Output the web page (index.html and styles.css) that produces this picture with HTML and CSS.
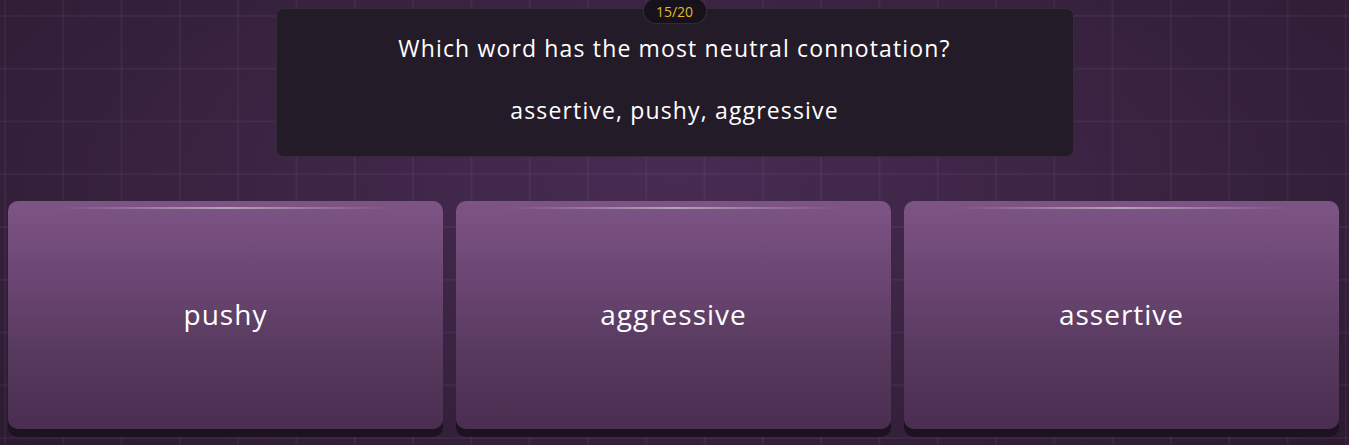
FILE: index.html
```html
<!DOCTYPE html>
<html lang="en">
<head>
    <meta charset="UTF-8">
    <meta name="viewport" content="width=device-width, initial-scale=1.0">
    <title>Word Quiz</title>
    <link rel="stylesheet" href="styles.css">
</head>
<body>
    <div class="quiz">
        <div class="question-box">
            <div class="progress">15/20</div>
            <p class="question">Which word has the most neutral connotation?</p>
            <p class="words">assertive, pushy, aggressive</p>
        </div>

        <div class="answers">
            <button class="answer">pushy</button>
            <button class="answer">aggressive</button>
            <button class="answer">assertive</button>
        </div>
    </div>
</body>
</html>
```

FILE: styles.css
```css
body {
    margin: 0;
    height: 100vh;
    overflow: hidden;
    font-family: 'Open Sans', 'Noto Sans', sans-serif;
    font-variant-ligatures: none;
    color: #fff;
    background-color: #33203a;
    background-image:
        linear-gradient(90deg, rgba(255, 255, 255, 0.04) 2px, transparent 2px),
        linear-gradient(rgba(255, 255, 255, 0.04) 2px, transparent 2px),
        radial-gradient(ellipse 70% 90% at 50% 40%, #482b53 0%, #3b2443 45%, #2b1a30 100%);
    background-size: 58.3px 100%, 100% 52.75px, 100% 100%;
    background-position: 4px 0, 0 15px, 0 0;
}

.quiz {
    display: flex;
    flex-direction: column;
    align-items: center;
    padding-top: 8px;
}

.question-box {
    position: relative;
    box-sizing: border-box;
    width: 798px;
    height: 149px;
    padding-top: 24px;
    background: #241b29;
    border: 1px solid rgba(255, 255, 255, 0.07);
    border-radius: 8px;
    text-align: center;
}

.progress {
    position: absolute;
    top: -11px;
    left: 50%;
    transform: translateX(-50%);
    width: 62px;
    height: 24px;
    line-height: 26px;
    font-size: 14px;
    color: #e2bb22;
    background: #16111a;
    border: 1px solid rgba(255, 255, 255, 0.12);
    border-radius: 13px;
}

.question,
.words {
    margin: 0;
    font-size: 23px;
    line-height: 30px;
    letter-spacing: 1.15px;
}

.words {
    margin-top: 32px;
}

.answers {
    display: grid;
    grid-template-columns: repeat(3, 1fr);
    gap: 13px;
    width: 100%;
    box-sizing: border-box;
    padding: 0 10px 0 8px;
    margin-top: 44px;
}

.answer {
    position: relative;
    height: 228px;
    padding-bottom: 4px;
    border: none;
    border-radius: 10px;
    font-family: inherit;
    font-size: 28px;
    letter-spacing: 1px;
    color: #fff;
    background: linear-gradient(#7d5585 0%, #6b4672 35%, #583a5f 65%, #4a2e50 100%);
    box-shadow: 0 8px 0 #1d1220;
    cursor: pointer;
}

/* thin shine along the top edge */
.answer::before {
    content: '';
    position: absolute;
    top: 6px;
    left: 12%;
    right: 12%;
    height: 2px;
    background: linear-gradient(90deg, transparent, rgba(255, 255, 255, 0.45), transparent);
}
```
